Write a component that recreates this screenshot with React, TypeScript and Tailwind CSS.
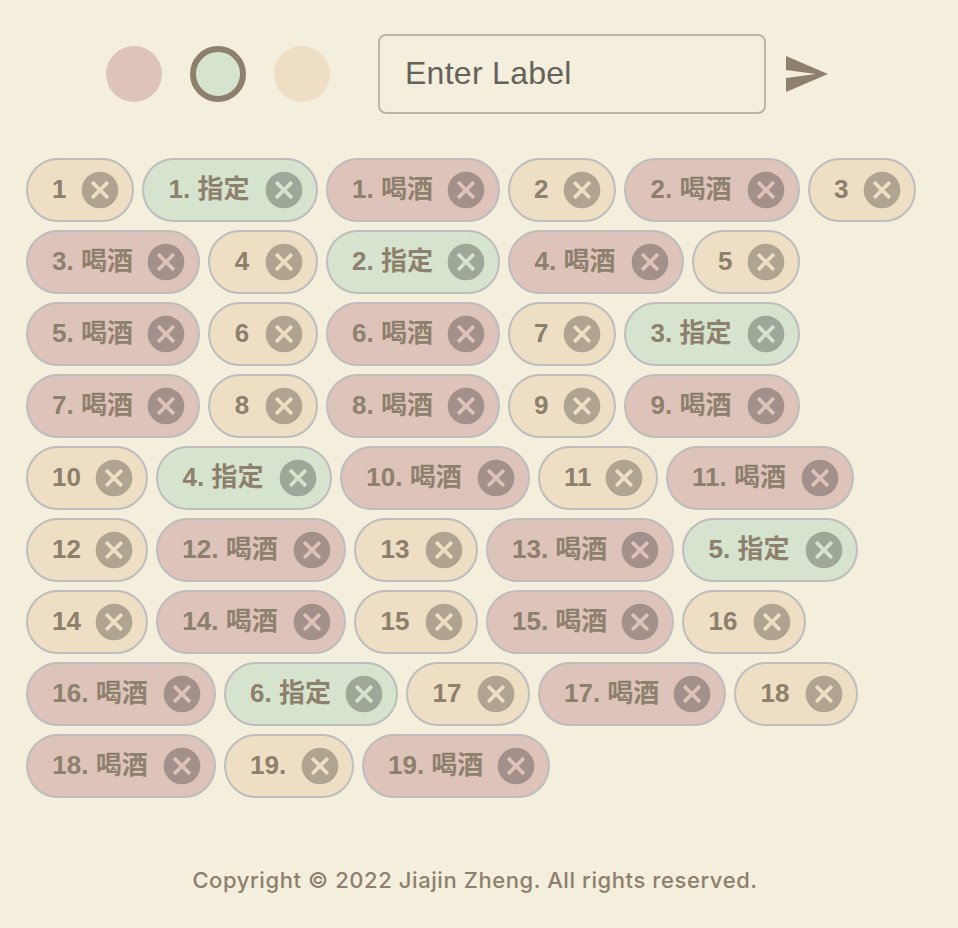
import { useState } from "react";

type Kind = "drink" | "assign" | "plain";
type Chip = [label: string, kind: Kind, width: string];

const fill: Record<Kind, string> = {
  drink: "bg-[#dec3ba]",
  assign: "bg-[#d6e3cf]",
  plain: "bg-[#eedec4]",
};

const initialChips: Chip[] = [
  ["1", "plain", "w-[108px]"],
  ["1. 指定", "assign", "w-[176px]"],
  ["1. 喝酒", "drink", "w-[174px]"],
  ["2", "plain", "w-[108px]"],
  ["2. 喝酒", "drink", "w-[176px]"],
  ["3", "plain", "w-[108px]"],
  ["3. 喝酒", "drink", "w-[174px]"],
  ["4", "plain", "w-[110px]"],
  ["2. 指定", "assign", "w-[174px]"],
  ["4. 喝酒", "drink", "w-[176px]"],
  ["5", "plain", "w-[108px]"],
  ["5. 喝酒", "drink", "w-[174px]"],
  ["6", "plain", "w-[110px]"],
  ["6. 喝酒", "drink", "w-[174px]"],
  ["7", "plain", "w-[108px]"],
  ["3. 指定", "assign", "w-[176px]"],
  ["7. 喝酒", "drink", "w-[174px]"],
  ["8", "plain", "w-[110px]"],
  ["8. 喝酒", "drink", "w-[174px]"],
  ["9", "plain", "w-[108px]"],
  ["9. 喝酒", "drink", "w-[176px]"],
  ["10", "plain", "w-[122px]"],
  ["4. 指定", "assign", "w-[176px]"],
  ["10. 喝酒", "drink", "w-[190px]"],
  ["11", "plain", "w-[120px]"],
  ["11. 喝酒", "drink", "w-[188px]"],
  ["12", "plain", "w-[122px]"],
  ["12. 喝酒", "drink", "w-[190px]"],
  ["13", "plain", "w-[124px]"],
  ["13. 喝酒", "drink", "w-[188px]"],
  ["5. 指定", "assign", "w-[176px]"],
  ["14", "plain", "w-[122px]"],
  ["14. 喝酒", "drink", "w-[190px]"],
  ["15", "plain", "w-[124px]"],
  ["15. 喝酒", "drink", "w-[188px]"],
  ["16", "plain", "w-[124px]"],
  ["16. 喝酒", "drink", "w-[190px]"],
  ["6. 指定", "assign", "w-[174px]"],
  ["17", "plain", "w-[124px]"],
  ["17. 喝酒", "drink", "w-[188px]"],
  ["18", "plain", "w-[124px]"],
  ["18. 喝酒", "drink", "w-[190px]"],
  ["19.", "plain", "w-[130px]"],
  ["19. 喝酒", "drink", "w-[188px]"],
];

const kinds: Kind[] = ["drink", "assign", "plain"];

function CancelIcon() {
  return (
    <svg viewBox="0 0 24 24" className="size-11 fill-black/26">
      <path d="M12 2C6.47 2 2 6.47 2 12s4.47 10 10 10 10-4.47 10-10S17.53 2 12 2zm5 13.59L15.59 17 12 13.41 8.41 17 7 15.59 10.59 12 7 8.41 8.41 7 12 10.59 15.59 7 17 8.41 13.41 12 17 15.59z" />
    </svg>
  );
}

export default function App() {
  const [kind, setKind] = useState<Kind>("assign");
  const [chips, setChips] = useState(initialChips);

  return (
    <div className="h-[928px] w-[958px] overflow-hidden bg-[#f4eedd] pt-[34px] font-['Liberation_Sans','Noto_Sans_CJK_SC',sans-serif] text-[#8d806c]">
      <div className="flex h-20 items-center pl-[106px]">
        <div className="flex gap-7">
          {kinds.map((k) => (
            <button
              key={k}
              aria-label={k}
              onClick={() => setKind(k)}
              className={`size-14 rounded-full ${fill[k]} ${k === kind ? "border-6 border-[#8d806c]" : ""}`}
            />
          ))}
        </div>
        <input
          placeholder="Enter Label"
          className="ml-12 h-20 w-[388px] rounded-lg border-2 border-[#bbb5a8] bg-transparent pr-6 pb-0.5 pl-[25px] text-[32px] tracking-[0.28px] text-[#65625b] outline-none placeholder:text-[#65625b]"
        />
        <button aria-label="Send" className="ml-4">
          <svg viewBox="0 0 24 24" className="size-12 fill-[#8d806c]">
            <path d="M2.01 21L23 12 2.01 3 2 10l15 2-15 2z" />
          </svg>
        </button>
      </div>

      <div className="mt-11 ml-[26px] flex w-[894px] flex-wrap gap-2">
        {chips.map(([label, k, width]) => (
          <div
            key={label}
            className={`flex h-16 items-center rounded-full border-2 border-[#bdbdbd] pr-2.5 pl-6 ${width} ${fill[k]}`}
          >
            <span className="min-w-0 flex-1 pb-0.5 text-center text-[26px] leading-[39px] font-bold whitespace-nowrap">
              {label}
            </span>
            <button
              className="ml-3 shrink-0"
              aria-label={`Remove ${label}`}
              onClick={() => setChips(chips.filter((c) => c[0] !== label))}
            >
              <CancelIcon />
            </button>
          </div>
        ))}
      </div>

      <p className="mt-16 w-[950px] text-center font-['Inter',sans-serif] text-[22px] leading-9 font-medium tracking-[0.58px]">
        Copyright © 2022 Jiajin Zheng. All rights reserved.
      </p>
    </div>
  );
}
